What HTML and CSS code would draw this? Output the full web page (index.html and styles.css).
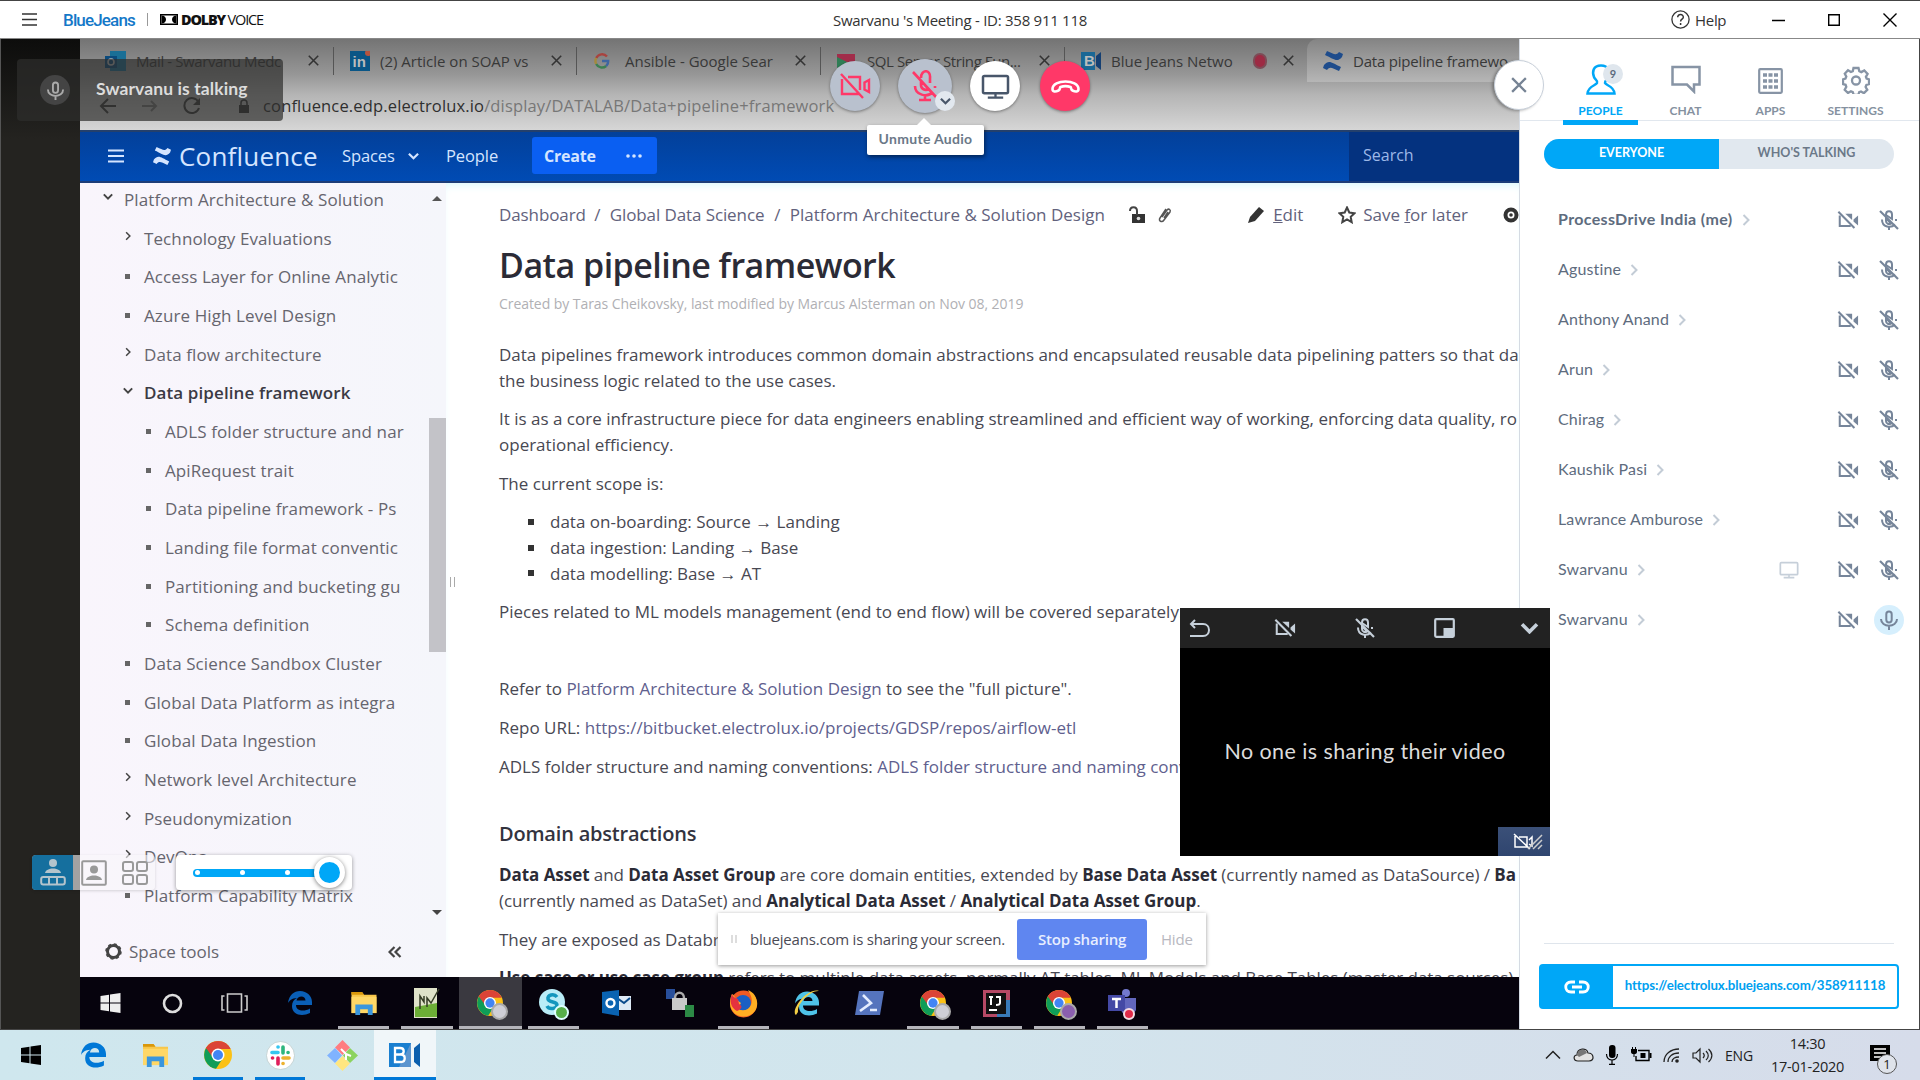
FILE: index.html
```html
<!DOCTYPE html>
<html lang="en">
<head>
<meta charset="utf-8">
<title>Swarvanu 's Meeting</title>
<link rel="stylesheet" href="styles.css">
</head>
<body>
<svg class="defs" aria-hidden="true">
  <symbol id="cam-off" viewBox="0 0 24 20"><path d="M3 5v11.500h12" fill="none" stroke="currentColor" stroke-width="2.200"/><path d="M9 3.200h7.500V10z" fill="currentColor"/><path d="M18 9.500L23 5v11l-5-4.500z" fill="currentColor"/><path d="M1.500 1l17.500 17.800" stroke="currentColor" stroke-width="2.200"/></symbol>
  <symbol id="mic-off" viewBox="0 0 20 20"><path d="M7 4.500C7 0 13 0 13 4.500V9l-6-4z" fill="none" stroke="currentColor" stroke-width="2"/><path d="M7 8v3c0 3 3 3.500 5 2.500zM10 16v4M3 9.500c0 8 9 9 13 5M17 9v2" fill="none" stroke="currentColor" stroke-width="2"/><path d="M1 1l18 18" stroke="currentColor" stroke-width="2.200"/></symbol>
  <symbol id="mic" viewBox="0 0 20 20"><rect x="7.300" y="1.500" width="5.400" height="11" rx="2.700" fill="none" stroke="currentColor" stroke-width="2"/><path d="M2 9c0 9 16 9 16 0M10 15.500V20" fill="none" stroke="currentColor" stroke-width="2"/></symbol>
  <symbol id="monitor" viewBox="0 0 30 26"><rect x="2" y="2" width="26" height="18" rx="1.500" fill="none" stroke="currentColor" stroke-width="2.600"/><path d="M15 20v4M7 24.500h16" stroke="currentColor" stroke-width="2.400"/></symbol>
  <symbol id="right" viewBox="0 0 8 12"><path d="M1.500 1l5 5-5 5" fill="none" stroke="currentColor" stroke-width="2"/></symbol>
  <symbol id="down" viewBox="0 0 12 8"><path d="M1 1.500l5 5 5-5" fill="none" stroke="currentColor" stroke-width="2.400"/></symbol>
  <symbol id="x" viewBox="0 0 14 14"><path d="M1 1l12 12M13 1L1 13" stroke="currentColor" stroke-width="2"/></symbol>
  <symbol id="conf" viewBox="0 0 20 20"><path d="M1 14c5-6 8-2 17 2l-2 4C9 17 7 15 4 19l-4-2zM19 6c-5 6-8 2-17-2l2-4c7 3 9 5 12 1l4 2z" fill="currentColor"/></symbol>
  <symbol id="win" viewBox="0 0 20 20"><path d="M0 3l8.500-1.200v7.700H0zM9.500 1.600L20 0v9.500H9.500zM0 10.500h8.500v7.700L0 17zM9.500 10.500H20V20L9.500 18.400z" fill="currentColor"/></symbol>
  <symbol id="edge" viewBox="0 0 24 24"><path d="M0 12C1 4 6 0 12 0c7 0 12 5 12 11v3H8c0 6 8 7 14 3.500V22c-8 4-18 2-18-7 0-4 2-6.500 5-8-5 0-8 3-9 5zM8.500 9.500h9C17.500 4 9.500 4 8.500 9.500z" fill="currentColor"/></symbol>
  <symbol id="folder" viewBox="0 0 28 26"><path d="M1 1h11l2 3h13v19H1z" fill="#f8c64a"/><path d="M1 1h11l2 3H1z" fill="#d9970b"/><path d="M1 6h26v17H1z" fill="#ffd766"/><path d="M5 25V14h18v11h-5v-6h-8v6z" fill="#3a96dd"/></symbol>
  <symbol id="chrome" viewBox="0 0 28 28"><circle cx="14" cy="14" r="14" fill="#fbc116"/><path d="M14 14L2 7A14 14 0 0 1 26.500 8H14z" fill="#db4437"/><path d="M2 7a14 14 0 0 0 10 20.800L19 17l-5-3z" fill="#0f9d58"/><path d="M2 7A14 14 0 0 1 26.500 8H14a6 6 0 0 0-5.500 8z" fill="#db4437"/><circle cx="14" cy="14" r="6.500" fill="#fff"/><circle cx="14" cy="14" r="5" fill="#4285f4"/></symbol>
</svg>

<header class="titlebar">
  <div class="brand">
    <svg width="15" height="13" viewBox="0 0 15 13"><path d="M0 1h15M0 6.500h15M0 12h15" stroke="#333" stroke-width="1.300"/></svg>
    <span class="logo">BlueJeans</span>
    <i class="rule"></i>
    <svg class="dolby" width="18" height="11" viewBox="0 0 18 11"><path d="M.7.7h16.600v9.600H.7z" fill="#fff" stroke="#000" stroke-width="1.400"/><path d="M1.500 1.500c6 0 6 8 0 8zM16.500 1.500c-6 0-6 8 0 8z" fill="#000"/></svg>
    <span class="dtext"><b>DOLBY</b> VOICE</span>
  </div>
  <div class="mtitle">Swarvanu 's Meeting - ID: 358 911 118</div>
  <div class="winbtns">
    <svg width="19" height="19" viewBox="0 0 19 19"><circle cx="9.500" cy="9.500" r="8.600" fill="none" stroke="#333" stroke-width="1.300"/><path d="M6.700 7.200c0-3.800 5.800-3.500 5.600 0 0 2-2.700 2-2.700 4.200M9.600 13v2" fill="none" stroke="#333" stroke-width="1.500"/></svg>
    <span class="help">Help</span>
    <svg class="wmin" width="13" height="12" viewBox="0 0 13 12"><path d="M0 6.500h13" stroke="#000" stroke-width="1.500"/></svg>
    <svg class="wmax" width="12" height="12" viewBox="0 0 12 12"><path d="M.7.700h10.600v10.600H.7z" fill="none" stroke="#000" stroke-width="1.400"/></svg>
    <svg class="wclose" width="14" height="14" viewBox="0 0 14 14"><path d="M.5.500l13 13M13.500.500l-13 13" stroke="#000" stroke-width="1.400"/></svg>
  </div>
</header>

<main class="work">
  <section class="stage">
    <div class="shared">
      <div class="chrome">
        <div class="tabs">
          <div class="tab"><svg width="21" height="20" viewBox="0 0 21 20"><path d="M5 0h16v20H5z" fill="#1a6f96"/><path d="M0 5h12v12H0z" fill="#0b4a7c"/><circle cx="6" cy="11" r="3" fill="none" stroke="#bbb" stroke-width="1.600"/></svg><span>Mail - Swarvanu Medc</span><svg class="tx"><use href="#x"/></svg></div>
          <div class="tab"><svg width="20" height="20" viewBox="0 0 20 20"><path d="M0 0h20v20H0z" fill="#0a5686"/><text x="2.500" y="16" class="in">in</text><circle cx="18" cy="2" r="3" fill="#b5543f"/></svg><span>(2) Article on SOAP vs</span><svg class="tx"><use href="#x"/></svg></div>
          <div class="tab g"><svg width="16" height="16" viewBox="0 0 16 16" fill="none" stroke-width="2.400"><path d="M13 3.500A6.500 6.500 0 0 0 2.200 5" stroke="#a8433f"/><path d="M2.200 5a6.500 6.500 0 0 0 0 6" stroke="#a48a3c"/><path d="M2.200 11a6.500 6.500 0 0 0 10 2" stroke="#3c8052"/><path d="M12.200 13a6 6 0 0 0 2-5H8" stroke="#3f65a0"/></svg><span>Ansible - Google Sear</span><svg class="tx"><use href="#x"/></svg></div>
          <div class="tab s"><svg width="20" height="20" viewBox="0 0 20 20"><path d="M0 3h18v8H0z" fill="#a12d4a"/><path d="M0 6l10 5-10 6z" fill="#2f7d55"/></svg><span>SQL Server String Fun...</span><svg class="tx"><use href="#x"/></svg></div>
          <div class="tab b"><svg width="20" height="18" viewBox="0 0 20 18"><path d="M0 0h14v18H0z" fill="#1a6795"/><path d="M15 4l5-4v18l-5-4z" fill="#153f72"/><text x="3" y="14" class="in">B</text></svg><span>Blue Jeans Netwo</span><i class="rec"></i><svg class="tx"><use href="#x"/></svg></div>
          <div class="tab on"><svg class="cf" width="20" height="20"><use href="#conf"/></svg><span>Data pipeline framewo</span></div>
        </div>
        <div class="urlbar">
          <svg width="18" height="16" viewBox="0 0 18 16"><path d="M17 8H2M9 1L2 8l7 7" fill="none" stroke="#3b3b3b" stroke-width="2"/></svg>
          <svg width="18" height="14" viewBox="0 0 18 14" class="fwd"><path d="M1 7h14M10 2l5 5-5 5" fill="none" stroke="#7a7a7a" stroke-width="2"/></svg>
          <svg width="18" height="18" viewBox="0 0 18 18"><path d="M15.500 5A7.500 7.500 0 1 0 16 11" fill="none" stroke="#3b3b3b" stroke-width="2"/><path d="M17 1v7h-7z" fill="#3b3b3b"/></svg>
          <svg class="lock" width="12" height="14" viewBox="0 0 12 14"><path d="M1 6h10v8H1z" fill="#333"/><path d="M3 6V4c0-4 6-4 6 0v2" fill="none" stroke="#333" stroke-width="1.500"/></svg>
          <span class="url"><b>confluence.edp.electrolux.io</b>/display/DATALAB/Data+pipeline+framework</span>
        </div>
      </div>
      <div class="chead">
        <svg width="16" height="14" viewBox="0 0 16 14"><path d="M0 1.500h16M0 7h16M0 12.500h16" stroke="#d5e5ff" stroke-width="2.200"/></svg>
        <svg class="clogo" width="20" height="18"><use href="#conf"/></svg>
        <span class="cname">Confluence</span>
        <span class="nav n1">Spaces</span><svg class="nchev" width="11" height="8"><use href="#down"/></svg>
        <span class="nav n2">People</span>
        <div class="create"><b>Create</b><svg width="16" height="4" viewBox="0 0 16 4" fill="#d5e5ff"><circle cx="2" cy="2" r="1.800"/><circle cx="8" cy="2" r="1.800"/><circle cx="14" cy="2" r="1.800"/></svg></div>
        <div class="search">Search</div>
      </div>
      <div class="page">
        <aside class="tree">
          <ul class="nodes">
            <li class="l0"><svg class="d"><use href="#down"/></svg><span>Platform Architecture &amp; Solution</span></li>
            <li><svg class="r"><use href="#right"/></svg><span>Technology Evaluations</span></li>
            <li><i></i><span>Access Layer for Online Analytic</span></li>
            <li><i></i><span>Azure High Level Design</span></li>
            <li><svg class="r"><use href="#right"/></svg><span>Data flow architecture</span></li>
            <li><svg class="d"><use href="#down"/></svg><span class="cur">Data pipeline framework</span></li>
            <li class="l2"><i></i><span>ADLS folder structure and nar</span></li>
            <li class="l2"><i></i><span>ApiRequest trait</span></li>
            <li class="l2"><i></i><span>Data pipeline framework - Ps</span></li>
            <li class="l2"><i></i><span>Landing file format conventic</span></li>
            <li class="l2"><i></i><span>Partitioning and bucketing gu</span></li>
            <li class="l2"><i></i><span>Schema definition</span></li>
            <li><i></i><span>Data Science Sandbox Cluster</span></li>
            <li><i></i><span>Global Data Platform as integra</span></li>
            <li><i></i><span>Global Data Ingestion</span></li>
            <li><svg class="r"><use href="#right"/></svg><span>Network level Architecture</span></li>
            <li><svg class="r"><use href="#right"/></svg><span>Pseudonymization</span></li>
            <li><svg class="r"><use href="#right"/></svg><span>DevOps</span></li>
            <li><i></i><span>Platform Capability Matrix</span></li>
          </ul>
          <div class="tools"><svg width="17" height="17" viewBox="0 0 17 17"><circle cx="8.500" cy="8.500" r="6" fill="none" stroke="#444" stroke-width="3"/><circle cx="8.500" cy="8.500" r="7.500" fill="none" stroke="#444" stroke-width="1.500" stroke-dasharray="3 2.900"/></svg><span>Space tools</span><svg class="fold" width="14" height="12" viewBox="0 0 14 12"><path d="M6.500 1l-5 5 5 5M12.500 1l-5 5 5 5" fill="none" stroke="#444" stroke-width="2.200"/></svg></div>
          <div class="scroll"><i class="up"></i><i class="thumb"></i><i class="dn"></i></div>
        </aside>
        <article class="doc">
          <div class="crumbs">
            <span class="c1">Dashboard</span><em>/</em><span class="c2">Global Data Science</span><em>/</em><span class="c3">Platform Architecture &amp; Solution Design</span>
            <svg class="ul" width="16" height="18" viewBox="0 0 16 18"><path d="M3 8h13v9H3z" fill="#333"/><path d="M1 5c0-5 7-5 7 0v4" fill="none" stroke="#444" stroke-width="2"/><circle cx="9.500" cy="12.500" r="1.800" fill="#ddd"/></svg>
            <svg class="clip" width="14" height="18" viewBox="0 0 14 18"><path d="M4 11l5-7c2-2 4 0 3 2l-6 8c-2 3-6 1-4-2l6-9M6 12l4-6" fill="none" stroke="#555" stroke-width="1.500"/></svg>
            <svg class="pen" width="17" height="17" viewBox="0 0 17 17"><path d="M0 17l2-6L11 1l5 4-9 10z" fill="#333"/></svg>
            <span class="c4"><u>E</u>dit</span>
            <svg class="star" width="18" height="18" viewBox="0 0 18 18"><path d="M9 1.500l2.300 5 5.200.7-3.800 3.600 1 5.400L9 13.500l-4.700 2.700 1-5.400L1.500 7.200l5.200-.7z" fill="none" stroke="#444" stroke-width="2"/></svg>
            <span class="c5">Save <u>f</u>or later</span>
            <svg class="eye" width="18" height="16" viewBox="0 0 18 16"><circle cx="9" cy="8" r="5.500" fill="none" stroke="#333" stroke-width="4"/><circle cx="9" cy="8" r="1.800" fill="#333"/></svg>
          </div>
          <h1>Data pipeline framework</h1>
          <div class="meta">Created by Taras Cheikovsky, last modified by Marcus Alsterman on Nov 08, 2019</div>
          <p>Data pipelines framework introduces common domain abstractions and encapsulated reusable data pipelining patters so that da<br>the business logic related to the use cases.</p>
          <p>It is as a core infrastructure piece for data engineers enabling streamlined and efficient way of working, enforcing data quality, ro<br>operational efficiency.</p>
          <p>The current scope is:</p>
          <ul class="scope"><li>data on-boarding: Source → Landing</li><li>data ingestion: Landing → Base</li><li>data modelling: Base → AT</li></ul>
          <p>Pieces related to ML models management (end to end flow) will be covered separately.</p>
          <p>&nbsp;</p>
          <p>Refer to <a>Platform Architecture &amp; Solution Design</a> to see the "full picture".</p>
          <p>Repo URL: <a>https://bitbucket.electrolux.io/projects/GDSP/repos/airflow-etl</a></p>
          <p>ADLS folder structure and naming conventions: <a>ADLS folder structure and naming conventions</a></p>
          <h2>Domain abstractions</h2>
          <p class="asset"><b>Data Asset</b> and <b>Data Asset Group</b> are core domain entities, extended by <b>Base Data Asset</b> (currently named as DataSource) / <b>Ba</b><br>(currently named as DataSet) and <b>Analytical Data Asset</b> / <b>Analytical Data Asset Group</b>.</p>
          <p>They are exposed as Databricks</p>
          <p class="asset"><b>Use case or use case group</b> refers to multiple data assets, normally AT tables, ML Models and Base Tables (master data sources)</p>
          <i class="split"></i>
        </article>
      </div>
      <div class="ibar">
        <div><svg class="w" width="21" height="20"><use href="#win"/></svg></div>
        <div><svg class="nudge" width="21" height="21" viewBox="0 0 21 21"><circle cx="10.500" cy="10.500" r="8.500" fill="none" stroke="#ddd" stroke-width="2.600"/></svg></div>
        <div><svg class="nudge2" width="27" height="20" viewBox="0 0 27 20"><path d="M6.500 1h14v18h-14zM3.500 3H1v14h2.500M23.500 3H26v14h-2.500" fill="none" stroke="#ccc" stroke-width="1.600"/></svg></div>
        <div><svg class="e" width="24" height="26"><use href="#edge"/></svg></div>
        <div class="u"><svg width="28" height="25"><use href="#folder"/></svg></div>
        <div class="u"><svg width="28" height="32" viewBox="0 0 28 32"><path d="M1 1h23v30H1z" fill="#dfe3c9"/><path d="M2 20l22-4v14H2z" fill="#6cae36"/><path d="M7 22V9l4 6V9M14 20V11l4 5 8-14" fill="none" stroke="#343c24" stroke-width="1.500"/></svg></div>
        <div class="u act"><svg width="26" height="26"><use href="#chrome"/></svg><i class="av"></i></div>
        <div class="u"><svg width="28" height="28" viewBox="0 0 28 28"><circle cx="13" cy="13" r="13" fill="#b9edf7"/><path d="M18 8c-3-4-10-2-9 2s9 2 9 6-8 5-10 1" fill="none" stroke="#1397bd" stroke-width="3.500"/></svg><i class="av ok"></i></div>
        <div><svg width="30" height="26" viewBox="0 0 30 26"><path d="M14 6h15v14H14z" fill="#ddeaf5"/><path d="M15 8l7 5 6-5" fill="none" stroke="#0c4c8c" stroke-width="2"/><path d="M0 2l17-2v26L0 23z" fill="#0a63b1"/><circle cx="8.500" cy="13" r="4" fill="none" stroke="#fff" stroke-width="2.400"/></svg></div>
        <div><svg width="28" height="28" viewBox="0 0 28 28"><path d="M0 0h9v10H0z" fill="#284f9b"/><path d="M6 9h15v12H6z" fill="#c9c9c9"/><path d="M9 9c0-7 9-7 9 0" fill="none" stroke="#aaa" stroke-width="2.500"/><path d="M19 16h9v12h-9z" fill="#2c8a45"/></svg></div>
        <div class="u"><svg width="29" height="29" viewBox="0 0 29 29"><circle cx="14.500" cy="15" r="13.500" fill="#f05a22"/><circle cx="14" cy="14" r="8" fill="#1b5fc4"/><path d="M3 5c3 2 4 6 9 9-2 4-4 3-6 2 3 7 13 7 16 0 2-5 0-10-3-15 8 3 12 13 7 21-6 8-19 7-23-1C0 16 1 9 3 5z" fill="#ffae23"/><path d="M3 5c1 3 3 4 6 5l1 5c4 2 3 5-2 7-6-3-8-10-5-17z" fill="#e4323f"/></svg></div>
        <div><svg class="ie" width="27" height="28" viewBox="0 0 27 28"><use href="#edge" x="2" y="2" width="24" height="25"/><path d="M3 26C-3 22 14-2 26 2c-8-1-22 12-21 21z" fill="#f3cf45"/></svg></div>
        <div><svg width="29" height="24" viewBox="0 0 29 24"><path d="M4 0h25l-4 24H0z" fill="#5574bd"/><path d="M8 4l8 8-11 8M15 19h7" fill="none" stroke="#e4edff" stroke-width="2.600"/></svg></div>
        <div class="u"><svg width="26" height="26"><use href="#chrome"/></svg><i class="av"></i></div>
        <div class="u"><svg width="27" height="27" viewBox="0 0 27 27"><path d="M0 0h27v27H0z" fill="#b64965"/><path d="M14 10h13v17H14z" fill="#397bb8"/><path d="M3 3h20v21H3z" fill="#111"/><path d="M6 7h4M8 7v8M13 7h4v6c0 2-2 2-4 2M6 20h8" fill="none" stroke="#fff" stroke-width="2"/></svg></div>
        <div class="u"><svg width="26" height="26"><use href="#chrome"/></svg><i class="av pu"></i></div>
        <div class="u"><svg width="30" height="28" viewBox="0 0 30 28"><circle cx="18" cy="4" r="4" fill="#7379cf"/><path d="M13 9h15v12c-3 7-13 7-15 0z" fill="#6267bd"/><path d="M0 6h17v16H0z" fill="#4449a5"/><path d="M4 10h9M8.500 10v9" stroke="#fff" stroke-width="2.500"/></svg><i class="av rd"></i></div>
      </div>
    </div>

    <div class="sharing"><span class="pause"><i></i><i></i></span><span class="msg">bluejeans.com is sharing your screen.</span><b>Stop sharing</b><span class="hide">Hide</span></div>
    <div class="talking"><i><svg width="19" height="21"><use href="#mic"/></svg></i><b>Swarvanu is talking</b></div>
    <div class="controls">
      <button class="gray"><svg width="31" height="26" viewBox="0 0 31 26" fill="none" stroke="#ff3868" stroke-width="2.400"><path d="M2 6v15h18M8 4h12v13M24.500 9.500L29 7v12l-4.500-2.500zM1 1l22 24"/></svg></button>
      <button class="gray big"><svg width="26" height="32" viewBox="0 0 26 32" fill="none" stroke="#ff3868" stroke-width="2.600"><path d="M9 8c0-9 10-9 9 0v5M9 11v4c0 4 4 6 8 4M3 16c0 9 12 12 18 6M23 16v2M13 24v6M7 30h12M1 2l23 25"/></svg><i><svg width="11" height="8"><use href="#down"/></svg></i></button>
      <button class="white"><svg width="29" height="25"><use href="#monitor"/></svg></button>
      <button class="red"><svg width="29" height="13" viewBox="0 0 29 13"><path d="M14.500 1.500C8 1.500 1.500 4 1.500 9c0 3 3 3 6 1.500 2-1 1-3 2-3.500 3-1 7-1 10 0 1 .5 0 2.500 2 3.500 3 1.500 6 1.500 6-1.500 0-5-6.500-7.500-13-7.500z" fill="none" stroke="#fff" stroke-width="2.600"/></svg></button>
    </div>
    <div class="tip">Unmute Audio</div>
    <div class="layouts">
      <i class="sel"><svg width="26" height="27" viewBox="0 0 26 27"><circle cx="13" cy="4" r="4" fill="#b5c4cc"/><path d="M5 14c1-6 15-6 16 0z" fill="#b5c4cc"/><rect x="1.200" y="18" width="23.600" height="7.600" rx="2" fill="none" stroke="#b5c4cc" stroke-width="2"/><path d="M9 18v7M17 18v7" stroke="#b5c4cc" stroke-width="2"/></svg></i>
      <i><svg width="26" height="26" viewBox="0 0 26 26"><rect x="1.200" y="1.200" width="23.600" height="23.600" rx="1" fill="none" stroke="#999" stroke-width="2"/><circle cx="13" cy="9.500" r="4" fill="#999"/><path d="M5 20c1-6 15-6 16 0z" fill="#999"/></svg></i>
      <i><svg width="26" height="24" viewBox="0 0 26 24" fill="none" stroke="#999" stroke-width="2"><rect x="1" y="1" width="10" height="9" rx="2"/><rect x="15" y="1" width="10" height="9" rx="2"/><rect x="1" y="14" width="10" height="9" rx="2"/><rect x="15" y="14" width="10" height="9" rx="2"/></svg></i>
    </div>
    <div class="slider"><div class="track"><i></i><i></i><i></i></div><b></b></div>
  </section>

  <aside class="panel">
    <nav>
      <div class="on"><svg width="30" height="32" viewBox="0 0 30 32"><path d="M15 1.500C7 1.500 6 8 8 13c1 3 4 3 3 6-1 2.500-9 3-9.500 10.500h27C28 22 20 21.500 19 19c0-3 2-3 3-6 2-5 1-11.500-7-11.500z" fill="none" stroke="#00a7f7" stroke-width="2.500"/></svg><em>9</em><span>PEOPLE</span></div>
      <div><svg width="30" height="29" viewBox="0 0 30 29"><path d="M1.500 2v17.500H16l7 7v-7h5.500V2z" fill="none" stroke="#8794a5" stroke-width="2.500"/></svg><span>CHAT</span></div>
      <div><svg width="25" height="26" viewBox="0 0 25 26"><rect x="1.200" y="1.200" width="22.600" height="23.600" rx="1" fill="none" stroke="#8794a5" stroke-width="2.200"/><path d="M5 7h4M10.500 7h4M16 7h4M5 13h4M10.500 13h4M16 13h4M5 19h4M10.500 19h4M16 19h4" stroke="#8794a5" stroke-width="3.700"/></svg><span>APPS</span></div>
      <div><svg width="28" height="28" viewBox="0 0 28 28"><path d="M11.500 2h5l.8 3.200 2 .9 3-1.700 3.300 3.500-1.700 2.900.7 1.700 2.400.9v4.800l-2.600.8-.8 2 1.700 2.900-3.400 3.300-2.900-1.700-1.800.7-.9 2.700h-4.600l-.9-2.800-1.900-.8-2.900 1.700-3.300-3.300 1.600-2.900-.7-2-2.600-.8v-4.700l2.500-.8.8-1.900-1.500-2.900L6 4.300l2.900 1.700 1.900-.8z" fill="none" stroke="#8794a5" stroke-width="2.300"/><circle cx="14" cy="14.500" r="4" fill="none" stroke="#8794a5" stroke-width="2.300"/></svg><span>SETTINGS</span></div>
    </nav>
    <div class="seg"><b>EVERYONE</b><b>WHO'S TALKING</b></div>
    <ul class="people">
      <li><span class="me">ProcessDrive India (me)</span><svg class="go"><use href="#right"/></svg><svg class="cam"><use href="#cam-off"/></svg><svg class="mic"><use href="#mic-off"/></svg></li>
      <li><span>Agustine</span><svg class="go"><use href="#right"/></svg><svg class="cam"><use href="#cam-off"/></svg><svg class="mic"><use href="#mic-off"/></svg></li>
      <li><span>Anthony Anand</span><svg class="go"><use href="#right"/></svg><svg class="cam"><use href="#cam-off"/></svg><svg class="mic"><use href="#mic-off"/></svg></li>
      <li><span>Arun</span><svg class="go"><use href="#right"/></svg><svg class="cam"><use href="#cam-off"/></svg><svg class="mic"><use href="#mic-off"/></svg></li>
      <li><span>Chirag</span><svg class="go"><use href="#right"/></svg><svg class="cam"><use href="#cam-off"/></svg><svg class="mic"><use href="#mic-off"/></svg></li>
      <li><span>Kaushik Pasi</span><svg class="go"><use href="#right"/></svg><svg class="cam"><use href="#cam-off"/></svg><svg class="mic"><use href="#mic-off"/></svg></li>
      <li><span>Lawrance Amburose</span><svg class="go"><use href="#right"/></svg><svg class="cam"><use href="#cam-off"/></svg><svg class="mic"><use href="#mic-off"/></svg></li>
      <li><span>Swarvanu</span><svg class="go"><use href="#right"/></svg><svg class="mon"><use href="#monitor"/></svg><svg class="cam"><use href="#cam-off"/></svg><svg class="mic"><use href="#mic-off"/></svg></li>
      <li><span>Swarvanu</span><svg class="go"><use href="#right"/></svg><svg class="cam"><use href="#cam-off"/></svg><i class="live"><svg width="20" height="20"><use href="#mic"/></svg></i></li>
    </ul>
    <div class="foot"><div class="link"><i><svg width="26" height="14" viewBox="0 0 26 14"><path d="M11 2H7C0 2 0 12 7 12h4M15 2h4c7 0 7 10 0 10h-4M8 7h10" fill="none" stroke="#fff" stroke-width="2.800"/></svg></i><b>https://electrolux.bluejeans.com/358911118</b></div></div>
    <div class="collapse"><svg width="16" height="16"><use href="#x"/></svg></div>
  </aside>

  <section class="mini">
    <div class="mhead">
      <svg width="22" height="18" viewBox="0 0 22 18"><path d="M6 1L2 5l4 4M2 5h12c8 0 8 12 0 12H1" fill="none" stroke="#c6d0da" stroke-width="2"/></svg>
      <svg width="22" height="20"><use href="#cam-off"/></svg>
      <svg width="20" height="20"><use href="#mic-off"/></svg>
      <svg width="21" height="20" viewBox="0 0 21 20"><rect x="1.200" y="1.200" width="18.600" height="17.600" rx="1" fill="none" stroke="#c6d0da" stroke-width="2.200"/><path d="M9.500 10H20v9H9.500z" fill="#c6d0da"/></svg>
      <svg width="19" height="12"><use href="#down"/></svg>
    </div>
    <div class="mbody">No one is sharing their video</div>
    <div class="self"><svg width="30" height="18" viewBox="0 0 30 18" fill="none" stroke="#fff" stroke-width="1.500"><path d="M2 3v11h12V4H6M16 7l3-3v9l-3-2M1 1l16 15"/><path d="M15 16L29 2M20 16l9-9M25 16l4-4" stroke="#ccc"/></svg></div>
  </section>
</main>

<footer class="taskbar">
  <div class="apps">
    <div><svg class="k" width="20" height="20"><use href="#win"/></svg></div>
    <div><svg class="bl" width="25" height="26"><use href="#edge"/></svg></div>
    <div><svg width="29" height="25"><use href="#folder"/></svg></div>
    <div class="u"><svg width="28" height="28"><use href="#chrome"/></svg></div>
    <div class="u"><svg width="29" height="29" viewBox="0 0 29 29"><circle cx="14.500" cy="14.500" r="14" fill="#fff" stroke="#bcc" stroke-width=".8"/><g fill="none" stroke-width="3.600" stroke-linecap="round"><path d="M6 11.500h6M12 6h.1" stroke="#36c5f0"/><path d="M17 6v6M22 11.500h.1" stroke="#2eb67d"/><path d="M17 17h6M17 22.500h.1" stroke="#ecb22e"/><path d="M12 17v6M6.500 17h.1" stroke="#e01e5a"/></g></svg></div>
    <div><svg width="31" height="31" viewBox="0 0 31 31"><path d="M15.500 0l7.500 7.500-7.500 7.500L8 7.500z" fill="#ff7c80"/><path d="M8 8l7 7.500L8 23 0 15.500z" fill="#80b3ff"/><path d="M23 8l8 7.500-8 7.500-7-7.500z" fill="#8cd35f"/><path d="M15.500 16l7.500 7.500-7.500 7.500L8 23.500z" fill="#ffe680"/><path d="M14 9l5 5v6M19 14l5 2" fill="none" stroke="#fff" stroke-width="2"/></svg></div>
    <div class="u act"><svg width="31" height="24" viewBox="0 0 31 24"><path d="M0 0h22v24H0z" fill="#1a7fd0"/><path d="M22 0v24H10z" fill="#5c95cf"/><path d="M25 5l6-5v24l-6-5z" fill="#0c5fae"/><path d="M6 5h5c5 0 5 6.500 0 6.500H6zm0 6.500h6c5 0 5 7.500 0 7.500H6z" fill="none" stroke="#fff" stroke-width="2.300"/></svg></div>
  </div>
  <div class="tray">
    <svg width="16" height="10" viewBox="0 0 16 10"><path d="M1 8.500l7-7 7 7" fill="none" stroke="#222" stroke-width="1.500"/></svg>
    <svg width="21" height="14" viewBox="0 0 21 14"><path d="M5 13C0 13 0 7 4 7c0-7 10-8 11-2 6 0 7 8 1 8z" fill="#e3e3e3" stroke="#222" stroke-width="1.200"/><path d="M4 7c0-6 8-8 10-2L6 9z" fill="#777"/></svg>
    <svg width="14" height="20" viewBox="0 0 14 20"><rect x="4" y="0" width="6.500" height="13" rx="3" fill="#000"/><path d="M1.500 9c0 8 11 8 11 0M7 15v4M4 19.300h6" fill="none" stroke="#000" stroke-width="1.200"/></svg>
    <svg width="21" height="16" viewBox="0 0 21 16"><path d="M7 3.500h11v10H5V9" fill="none" stroke="#000" stroke-width="1.400"/><path d="M9.500 6h5v5h-5zM18.500 6h2v5h-2zM0 2h6v3c0 3-6 3-6 0zM1 0h1v2H1zM4 0h1v2H4zM2.500 7h1v3h-1z" fill="#000"/></svg>
    <svg width="17" height="15" viewBox="0 0 17 15"><path d="M1 14C1 6 8 1 16 1M5 14C5 9 9 5 16 5M9 14c0-3 3-5 7-5" fill="none" stroke="#222" stroke-width="1.300"/><circle cx="14" cy="13" r="1.800" fill="#222"/></svg>
    <svg width="21" height="17" viewBox="0 0 21 17"><path d="M1 6h3l4-4v13l-4-4H1zM11 6c1.500 1.500 1.500 3.500 0 5M14 4c3 3 3 6.500 0 9M16.500 2c4.500 4 4.500 9 0 13" fill="none" stroke="#222" stroke-width="1.200"/></svg>
    <span class="eng">ENG</span>
    <div class="clock"><span>14:30</span><span>17-01-2020</span></div>
    <div class="note"><svg width="20" height="21" viewBox="0 0 20 21"><path d="M0 0h20v16h-7l-4 5v-5H0z" fill="#000"/><path d="M4 4h12M4 8h12M4 12h8" stroke="#fff" stroke-width="1.300"/></svg><em>1</em></div>
  </div>
</footer>
</body>
</html>
```
FILE: styles.css
```css
* { box-sizing: border-box; }
body { margin: 0; width: 1920px; height: 1080px; overflow: hidden; display: flex; flex-direction: column; background: #fff; font-family: "Open Sans", "Noto Sans", sans-serif; color: #222; }
ul, p, h1, h2 { margin: 0; padding: 0; }
li { list-style: none; }
i, em { font-style: normal; }
svg { display: block; flex: none; }
span, b { white-space: nowrap; }
.defs { position: absolute; width: 0; height: 0; }

.titlebar { height: 39px; flex: none; border-top: 1px solid #444; border-bottom: 1px solid #888; display: grid; grid-template-columns: 1fr auto 1fr; align-items: center; }
.brand { display: flex; align-items: center; padding-left: 22px; }
.logo { margin-left: 26px; width: 72px; font: 500 17px/30px Roboto, sans-serif; color: #1478c8; letter-spacing: -.85px; }
.rule { width: 1px; height: 13px; background: #999; margin: 0 12px; }
.dtext { font: 14.500px/20px "Open Sans", sans-serif; margin-left: 3px; letter-spacing: -1.200px; color: #111; }
.dtext b { font-weight: 800; }
.mtitle { font-size: 15px; letter-spacing: -.27px; color: #333; }
.winbtns { display: flex; align-items: center; justify-content: flex-end; padding-right: 23px; }
.help { font-size: 15px; margin-left: 5px; width: 32px; letter-spacing: -.3px; color: #333; }
.wmin { margin-left: 45px; }
.wmax { margin-left: 43px; }
.wclose { margin-left: 43px; }

.work { position: relative; flex: none; height: 991px; display: flex; border-bottom: 1px solid #444; }
.stage { position: relative; width: 1519px; flex: none; background: linear-gradient(#0d0d0c, #242320 100px); padding-left: 80px; overflow: hidden; border-left: 1px solid #555; }
.shared { margin-left: -1px; width: 1440px; height: 990px; display: flex; flex-direction: column; overflow: hidden; background: #fff; }

.chrome { height: 91px; flex: none; background: linear-gradient(#747474, #969696 35px, #b4b4b4 55px, #d6d6d6); color: #383838; }
.tabs { height: 46px; display: grid; grid-template-columns: 254px 243px 244px 244px 242px 213px; align-items: center; font-size: 15px; letter-spacing: 0; padding-bottom: 3px; }
.tab { height: 28px; display: flex; align-items: center; border-right: 1px solid #555; padding-left: 16px; }
.tab:first-child { padding-left: 25px; }
.tab:nth-child(5), .tab.on { border: 0; }
.tab span { margin-left: 10px; flex: 1; min-width: 0; }
.tab:first-child span { letter-spacing: -.4px; }
.tab.g span { margin-left: 15px; }
.tab.g { padding-left: 17px; }
.tab.s span { letter-spacing: -.4px; }
.tx { width: 11px; height: 11px; margin: 0 14px 0 8px; color: #333; }
.tab .rec { width: 14px; height: 16px; border-radius: 8px; background: #9d2a43; border: 2px solid #7d4b56; margin-left: 8px; }
.tab.b span { flex: 0 0 134px; }
.tab.b .tx { margin: 0 0 0 16px; }
.tab.on { height: 43px; background: linear-gradient(#848484, #b6b6b6); border-radius: 10px 0 0 0; }
.tab.on span { letter-spacing: -.2px; }
.cf { color: #1e4c8c; }
.in { font: bold 15px "Liberation Sans", sans-serif; fill: #bbb; }
.urlbar { height: 44px; display: flex; align-items: center; padding-left: 19px; padding-bottom: 3px; }
.fwd { margin: 0 24px; }
.lock { margin: 0 13px 0 37px; }
.url { font-size: 16.500px; color: #777; letter-spacing: .15px; }
.url b { font-weight: 400; color: #2f2f2f; }

.chead { height: 53px; flex: none; border-top: 2px solid #24406c; border-bottom: 2px solid #1d3d78; background: linear-gradient(#03409a, #004bb4); display: flex; align-items: center; padding: 0 0 2px 28px; color: #d5e5ff; }
.clogo { margin: 0 7px 0 28px; }
.cname { font-size: 26px; line-height: 32px; width: 163px; letter-spacing: .2px; font-weight: 500; }
.nav { font-size: 16.500px; letter-spacing: -.1px; }
.n1 { width: 66px; }
.n2 { margin-left: 27px; width: 86px; }
.create { height: 37px; width: 125px; background: #0a5ff2; border-radius: 3px; display: flex; align-items: center; justify-content: space-between; padding: 0 15px 0 12px; font-size: 16px; }
.create b { letter-spacing: -.2px; }
.search { margin: 0 0 -2px auto; width: 171px; height: 49px; line-height: 46px; background: #04327f; padding-left: 14px; font-size: 16px; color: #9db8e8; }

.page { flex: none; height: 794px; display: flex; overflow: hidden; font-size: 17px; }
.tree { width: 366px; flex: none; background: linear-gradient(90deg, #f9f5fc, #f5f6fb); display: grid; grid-template-columns: 1fr 18px; grid-template-rows: 743px 51px; color: #66656e; }
.nodes { padding-left: 24px; margin-top: -3px; min-width: 0; }
.nodes li { height: 38.680px; margin-left: 20px; display: flex; align-items: center; letter-spacing: .1px; }
.nodes li.l0 { margin-left: 0; }
.nodes li.l2 { margin-left: 41px; }
.nodes li > i { width: 5px; height: 5px; background: #666; margin: 0 14px 0 1px; flex: none; }
.nodes .r { width: 6px; height: 10px; margin: -5px 13px 0 1px; color: #444; }
.nodes .d { width: 10px; height: 7px; margin: -5px 11px 0 -1px; color: #444; }
.nodes .cur { font-weight: 600; color: #3b3a44; }
.tools { grid-row: 2; display: flex; align-items: center; padding: 0 26px 0 25px; }
.tools span { margin-left: 7px; }
.fold { margin-left: auto; }
.scroll { grid-column: 2; grid-row: 1; display: flex; flex-direction: column; align-items: center; }
.up { margin-top: 13px; border: 5px solid transparent; border-top: 0; border-bottom-color: #555; }
.thumb { width: 17px; height: 234px; margin-top: 217px; background: #c3c3c8; }
.dn { margin-top: 258px; border: 5px solid transparent; border-bottom: 0; border-top-color: #444; }

.doc { position: relative; width: 1074px; flex: none; padding-left: 53px; color: #484852; line-height: 25.700px; box-shadow: inset 0 6px 8px -4px #d8f8fc; }
.doc p { white-space: nowrap; margin-bottom: 12.900px; }
.crumbs { height: 63px; display: flex; align-items: center; color: #62627c; }
.crumbs em { width: 25px; text-align: center; }
.c1 { width: 86px; letter-spacing: -.1px; } .c2 { width: 157px; letter-spacing: -.1px; } .c3 { width: 319px; } .c4 { width: 30px; } .c5 { width: 106px; }
.ul { margin-left: 24px; } .clip { margin-left: 13px; } .pen { margin: 0 8px 0 76px; } .star { margin: 0 7px 0 35px; } .eye { margin-left: 34px; }
.doc h1 { font-size: 34px; line-height: 40px; font-weight: 600; letter-spacing: -.53px; color: #2b2b36; margin-top: -1px; }
.meta { font-size: 14px; line-height: 20px; margin: 9px 0 28px; color: #b0b0b4; letter-spacing: -.06px; }
.scope { margin-bottom: 12.900px; }
.scope li { display: flex; align-items: center; }
.scope li::before { content: ""; width: 6px; height: 6px; background: #333; margin: 0 16px 0 29px; }
.doc a { color: #60608e; }
.doc h2 { font-size: 20px; line-height: 28px; font-weight: 600; margin: 41px 0 14px; color: #33333e; letter-spacing: -.2px; }
.doc .asset { letter-spacing: -.05px; }
.doc .asset b { color: #2b2b36; font-weight: 700; }
.split { position: absolute; left: 4px; top: 394px; width: 5px; height: 10px; border: solid #aaa; border-width: 0 1px; }

.ibar { height: 52px; flex: none; background: #06030d; display: grid; grid-template-columns: repeat(17, 63.250px); margin-left: -1px; }
.ibar > div, .apps > div { position: relative; display: flex; align-items: center; justify-content: center; }
.ibar .u::after { content: ""; position: absolute; bottom: 0; left: 6px; right: 6px; height: 3px; background: #b5b5bb; }
.ibar .act { background: #3a3940; }
.ibar .act::after { left: 0; right: 0; }
.nudge { margin-right: 2px; } .nudge2 { margin-right: 6px; }
.w { color: #eee; } .e { color: #0a5fb6; } .ie { color: #4fc3e8; }
.av { position: absolute; width: 17px; height: 17px; border-radius: 50%; right: 14px; bottom: 9px; background: #cfcfd6; border: 2px solid #aaa; }
.av.ok { background: #56b04a; border-color: #dff; right: 16px; width: 15px; height: 15px; }
.av.pu { background: #8a5fae; }
.av.rd { background: #e02a48; border-color: #f4dbe2; width: 12px; height: 12px; right: 19px; }

.sharing { position: absolute; left: 717px; top: 874px; width: 488px; height: 52px; background: #fff; box-shadow: 0 1px 4px #999; display: flex; align-items: center; font-size: 15px; color: #4b4b55; letter-spacing: -.2px; }
.pause { width: 32px; display: flex; justify-content: center; gap: 2px; }
.pause i { width: 2px; height: 8px; background: #ddd; }
.msg { width: 267px; }
.sharing b { width: 130px; height: 41px; line-height: 41px; text-align: center; color: #e8eeff; background: #5f86f0; font-weight: 600; border-radius: 3px; }
.hide { margin-left: 14px; color: #b8b8c0; }

.talking { position: absolute; left: 16px; top: 20px; width: 266px; height: 62px; border-radius: 4px; background: rgba(45,45,44,.7); display: flex; align-items: center; color: #dcdcdc; }
.talking i { width: 30px; height: 30px; border-radius: 50%; background: #444; color: #aaa; display: flex; align-items: center; justify-content: center; margin: 0 26px 0 23px; }
.talking b { font: 700 17.500px Lato, sans-serif; letter-spacing: .1px; padding-bottom: 3px; }

.controls { position: absolute; left: 829px; top: 20px; height: 54px; display: flex; align-items: center; gap: 18px; }
.controls button { position: relative; border: 0; padding: 0; width: 50px; height: 50px; border-radius: 50%; display: flex; align-items: center; justify-content: center; box-shadow: 0 1px 3px rgba(0,0,0,.4); color: #48566a; }
.controls .gray { background: #b9c1ce; }
.controls .big { width: 54px; height: 54px; }
.controls .white { background: #fff; }
.controls .red { background: #ff3868; margin-left: 2px; }
.controls i { position: absolute; left: 37px; top: 32px; width: 20px; height: 20px; border-radius: 50%; background: #e2e8ef; display: flex; align-items: center; justify-content: center; }
.tip { position: absolute; left: 866px; top: 86px; width: 117px; height: 30px; border-radius: 2px; background: #fff; box-shadow: 1px 2px 4px rgba(0,0,0,.5); font: 700 14px/27px Lato, sans-serif; color: #6b7888; text-align: center; letter-spacing: .3px; }
.tip::before { content: ""; position: absolute; left: 50px; top: -7px; border: 7px solid transparent; border-top: 0; border-bottom-color: #fff; }

.layouts { position: absolute; left: 31px; top: 816px; width: 123px; height: 35px; display: flex; border-radius: 4px; overflow: hidden; background: rgba(248,246,250,.6); box-shadow: 0 1px 3px rgba(0,0,0,.15); }
.layouts i { width: 41px; display: flex; align-items: center; justify-content: center; }
.layouts .sel { background: #156f9e; }
.slider { position: absolute; left: 175px; top: 816px; width: 176px; height: 35px; border-radius: 4px; background: #fff; box-shadow: 0 1px 4px rgba(0,0,0,.4); padding: 13.500px 17px; }
.track { height: 8px; width: 130px; border-radius: 4px; background: #00a7f7; display: flex; align-items: center; gap: 40px; padding-left: 2px; }
.track i { width: 5px; height: 5px; border-radius: 50%; background: #fff; }
.slider b { position: absolute; left: 138px; top: 2px; width: 31px; height: 31px; border-radius: 50%; background: #00a7f7; border: 5px solid #fff; box-shadow: 0 1px 4px rgba(0,0,0,.5); }

.panel { position: relative; flex: 1; border-left: 1px solid #d5dbe3; border-right: 1px solid #444; background: #fff; font-family: Lato, sans-serif; display: flex; flex-direction: column; }
.panel nav { height: 82px; flex: none; border-bottom: 1px solid #e1e7ee; display: grid; grid-template-columns: repeat(4, 85px); padding-left: 38px; }
.panel nav div { position: relative; height: 86px; display: flex; align-items: center; justify-content: flex-end; flex-direction: column; padding-bottom: 7px; color: #8591a0; }
.panel nav svg { margin: auto 0 9px; }
.panel nav span { font-weight: 700; font-size: 12px; line-height: 15px; }
.panel nav .on { color: #00a7f7; }
.panel nav .on svg { margin-bottom: 7px; }
.panel nav .on::after { content: ""; position: absolute; left: 5px; width: 75px; bottom: 0; height: 5px; background: #00a7f7; }
.panel nav em { position: absolute; left: 45px; top: 25px; width: 20px; height: 20px; border-radius: 50%; background: #dfe6ed; font: 700 11px/20px Lato, sans-serif; text-align: center; color: #5b6a7c; }
.seg { margin: 18px 0 25px 24px; width: 350px; height: 30px; flex: none; border-radius: 15px; overflow: hidden; display: flex; font-size: 12.500px; line-height: 27px; text-align: center; background: #e1e8ef; color: #6b7888; }
.seg b { flex: 1; }
.seg b:first-child { background: #00a7f7; color: #fff; }
.people { padding: 1px 20px 0 38px; }
.people li { height: 50px; display: flex; align-items: center; font-size: 16px; color: #5e6c7e; letter-spacing: .15px; }
.people span { padding-bottom: 3px; }
.people .me { font-weight: 700; letter-spacing: .35px; }
.go { width: 8px; height: 12px; margin-left: 9px; margin-right: auto; color: #c3ccd6; }
.cam { width: 22px; height: 20px; color: #76859a; }
.people .mic { width: 20px; height: 20px; margin-left: 20px; color: #76859a; }
.mon { width: 20px; height: 20px; color: #c6cfd9; margin-right: 38px; }
.live { width: 30px; height: 30px; border-radius: 50%; background: #d6effd; display: flex; align-items: center; justify-content: center; color: #76859a; margin: 0 -5px 0 15px; }
.foot { margin: auto 20px 20px 19px; }
.foot::before { content: ""; display: block; height: 1px; width: 350px; margin: 0 0 20px 5px; background: #dfe5ec; }
.link { height: 45px; border: 2px solid #00a7f7; border-radius: 4px; display: flex; align-items: center; }
.link i { width: 72px; height: 41px; background: #00a7f7; display: flex; align-items: center; justify-content: center; }
.link b { flex: 1; text-align: center; font-size: 13.300px; color: #00a0f0; letter-spacing: -.1px; padding-bottom: 3px; }
.collapse { position: absolute; left: -26px; top: 21px; width: 50px; height: 50px; border-radius: 50%; background: #fff; border: 1px solid #c8d0da; box-shadow: -2px 1px 3px rgba(0,0,0,.3); display: flex; align-items: center; justify-content: center; color: #768394; }

.mini { position: absolute; left: 1180px; top: 569px; width: 370px; height: 248px; background: #000; display: flex; flex-direction: column; }
.mhead { height: 40px; background: #222; display: grid; grid-template-columns: 85px 81px 79px 86px 20px; align-items: center; padding-left: 9px; color: #c6d0da; }
.mbody { flex: 1; display: flex; align-items: center; justify-content: center; font: 21.500px Lato, sans-serif; color: #dcdcdc; letter-spacing: .42px; padding-bottom: 3px; }
.self { position: absolute; right: 0; bottom: 0; width: 52px; height: 29px; background: linear-gradient(#3b5078, #2f456f); display: flex; align-items: center; justify-content: center; padding-left: 8px; }

.taskbar { flex: none; height: 50px; background: linear-gradient(90deg, #cfe7ee, #d2e5ed 50%, #d6dcea); display: flex; justify-content: space-between; }
.apps { display: grid; grid-template-columns: repeat(7, 62.300px); }
.apps .u::after { content: ""; position: absolute; bottom: 0; left: 6px; right: 6px; height: 3px; background: #0078d7; }
.apps .act { background: #f0f6f9; }
.apps .act::after { left: 0; right: 0; }
.k { color: #000; } .bl { color: #0078d7; }
.tray { display: flex; align-items: center; padding-right: 30px; gap: 11.500px; }
.eng { font-size: 14px; width: 32px; letter-spacing: -.2px; margin-left: 1px; }
.clock { width: 78px; display: flex; flex-direction: column; align-items: center; font-size: 14.500px; line-height: 23px; letter-spacing: -.25px; }
.note { position: relative; margin-left: 12px; }
.note em { position: absolute; left: 7px; top: 9px; width: 20px; height: 20px; border-radius: 50%; border: 1px solid #555; background: #dfe3ea; font-size: 13px; line-height: 18px; text-align: center; }
```
